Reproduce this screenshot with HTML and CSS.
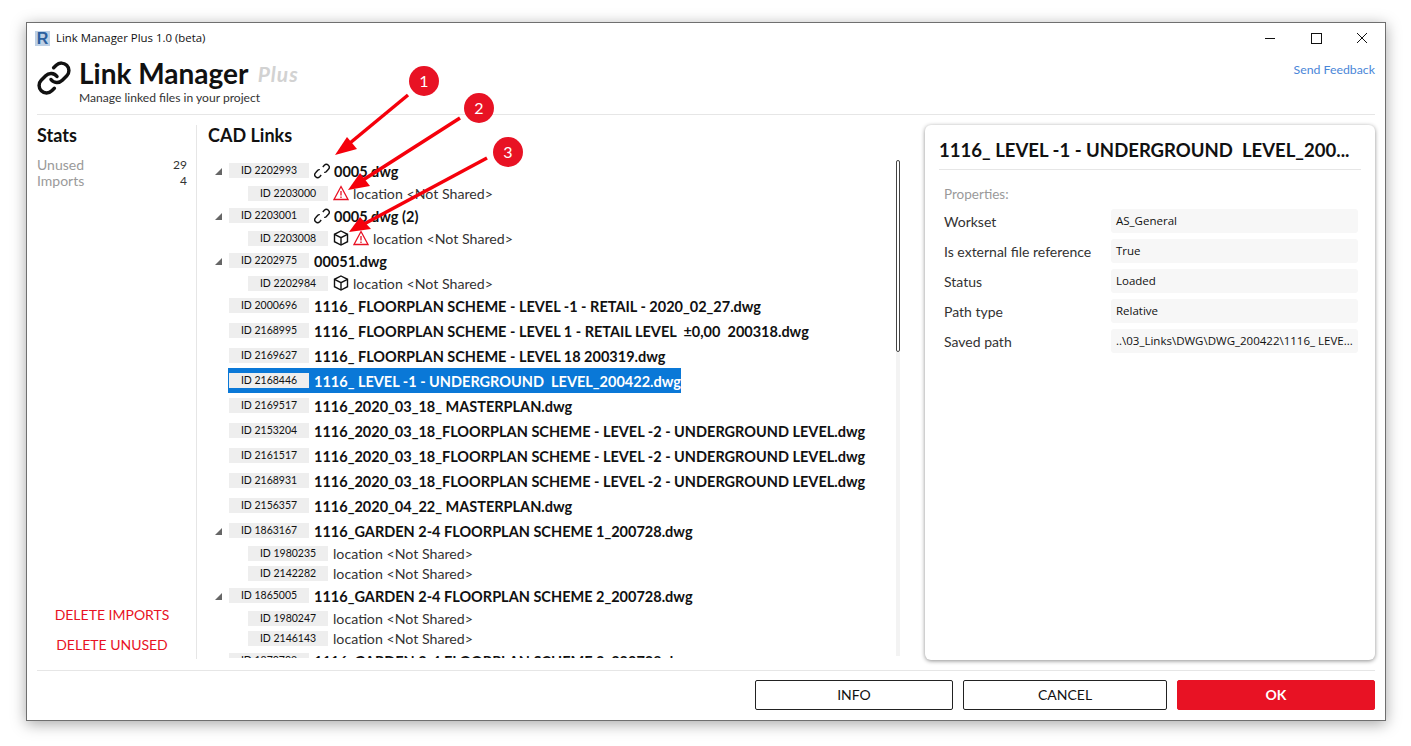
FILE: index.html

```html
<!DOCTYPE html>
<html lang="en">
<head>
    <meta charset="UTF-8">
    <title>Link Manager Plus</title>
    <link rel="stylesheet" href="styles.css">
</head>
<body>

<svg class="defs" width="0" height="0">
    <symbol id="i-link" viewBox="0 0 24 24">
        <path d="M10 13a5 5 0 0 0 7.54.54l3-3a5 5 0 0 0-7.07-7.07l-1.72 1.71"/>
        <path d="M14 11a5 5 0 0 0-7.54-.54l-3 3a5 5 0 0 0 7.07 7.07l1.71-1.71"/>
    </symbol>
    <symbol id="i-broken" viewBox="0 0 16 16">
        <path d="M8.800 4L10.300 2.200a2.900 2.900 0 0 1 4.100 4.100L12.200 8.800a2 2 0 0 1-2 .5"/>
        <path d="M7.200 12L5.700 13.800a2.900 2.900 0 0 1-4.100-4.100L3.800 7.200a2 2 0 0 1 2-.5"/>
    </symbol>
    <symbol id="i-warn" viewBox="0 0 16 16">
        <path d="M8 1.500L15 14.500H1z"/>
        <path d="M8 6v4.600M8 11.600v1.400"/>
    </symbol>
    <symbol id="i-cube" viewBox="0 0 16 16">
        <path d="M8 1L14.500 4.300V11.700L8 15L1.500 11.700V4.300z"/>
        <path d="M1.500 4.300L8 7.600L14.500 4.300M8 7.600V15"/>
    </symbol>
</svg>

<div class="window">
    <div class="titlebar">
        <span class="app-icon">R</span>
        <span class="app-title">Link Manager Plus 1.0 (beta)</span>
        <div class="win-buttons">
            <span class="win-btn"><i class="win-min"></i></span>
            <span class="win-btn"><i class="win-max"></i></span>
            <span class="win-btn">
                <svg width="12" height="12" viewBox="0 0 12 12"><path d="M1 1L11 11M11 1L1 11" stroke="#111" fill="none"/></svg>
            </span>
        </div>
    </div>

    <div class="header">
        <svg class="logo"><use href="#i-link"/></svg>
        <div class="heading">
            <h1>Link Manager <em>Plus</em></h1>
            <p>Manage linked files in your project</p>
        </div>
        <a class="feedback">Send Feedback</a>
    </div>

    <div class="main">
        <div class="stats">
            <h2>Stats</h2>
            <div class="stat"><span>Unused</span><b>29</b></div>
            <div class="stat"><span>Imports</span><b>4</b></div>
            <div class="delete-actions">
                <a>DELETE IMPORTS</a>
                <a>DELETE UNUSED</a>
            </div>
        </div>

        <div class="links">
            <h2>CAD Links</h2>
            <div class="tree-wrap">
                <div class="tree">
                    <div class="row"><i class="caret"></i><span class="chip">ID 2202993</span><svg class="ic stroke"><use href="#i-broken"/></svg><span class="name">0005.dwg</span></div>
                    <div class="row child"><span class="chip">ID 2203000</span><svg class="ic warn"><use href="#i-warn"/></svg><span class="sub">location &lt;Not Shared&gt;</span></div>
                    <div class="row"><i class="caret"></i><span class="chip">ID 2203001</span><svg class="ic stroke"><use href="#i-broken"/></svg><span class="name">0005.dwg (2)</span></div>
                    <div class="row child"><span class="chip">ID 2203008</span><svg class="ic stroke"><use href="#i-cube"/></svg><svg class="ic warn"><use href="#i-warn"/></svg><span class="sub">location &lt;Not Shared&gt;</span></div>
                    <div class="row"><i class="caret"></i><span class="chip">ID 2202975</span><span class="name">00051.dwg</span></div>
                    <div class="row child"><span class="chip">ID 2202984</span><svg class="ic stroke"><use href="#i-cube"/></svg><span class="sub">location &lt;Not Shared&gt;</span></div>
                    <div class="row"><span class="chip">ID 2000696</span><span class="name">1116_ FLOORPLAN SCHEME - LEVEL -1 - RETAIL - 2020_02_27.dwg</span></div>
                    <div class="row"><span class="chip">ID 2168995</span><span class="name">1116_ FLOORPLAN SCHEME - LEVEL 1 - RETAIL LEVEL &nbsp;±0,00 &nbsp;200318.dwg</span></div>
                    <div class="row"><span class="chip">ID 2169627</span><span class="name">1116_ FLOORPLAN SCHEME - LEVEL 18 200319.dwg</span></div>
                    <div class="row selected"><span class="chip">ID 2168446</span><span class="name">1116_ LEVEL -1 - UNDERGROUND &nbsp;LEVEL_200422.dwg</span></div>
                    <div class="row"><span class="chip">ID 2169517</span><span class="name">1116_2020_03_18_ MASTERPLAN.dwg</span></div>
                    <div class="row"><span class="chip">ID 2153204</span><span class="name">1116_2020_03_18_FLOORPLAN SCHEME - LEVEL -2 - UNDERGROUND LEVEL.dwg</span></div>
                    <div class="row"><span class="chip">ID 2161517</span><span class="name">1116_2020_03_18_FLOORPLAN SCHEME - LEVEL -2 - UNDERGROUND LEVEL.dwg</span></div>
                    <div class="row"><span class="chip">ID 2168931</span><span class="name">1116_2020_03_18_FLOORPLAN SCHEME - LEVEL -2 - UNDERGROUND LEVEL.dwg</span></div>
                    <div class="row"><span class="chip">ID 2156357</span><span class="name">1116_2020_04_22_ MASTERPLAN.dwg</span></div>
                    <div class="row"><i class="caret"></i><span class="chip">ID 1863167</span><span class="name">1116_GARDEN 2-4 FLOORPLAN SCHEME 1_200728.dwg</span></div>
                    <div class="row child"><span class="chip">ID 1980235</span><span class="sub">location &lt;Not Shared&gt;</span></div>
                    <div class="row child"><span class="chip">ID 2142282</span><span class="sub">location &lt;Not Shared&gt;</span></div>
                    <div class="row"><i class="caret"></i><span class="chip">ID 1865005</span><span class="name">1116_GARDEN 2-4 FLOORPLAN SCHEME 2_200728.dwg</span></div>
                    <div class="row child"><span class="chip">ID 1980247</span><span class="sub">location &lt;Not Shared&gt;</span></div>
                    <div class="row child"><span class="chip">ID 2146143</span><span class="sub">location &lt;Not Shared&gt;</span></div>
                    <div class="row"><i class="caret"></i><span class="chip">ID 1870709</span><span class="name">1116_GARDEN 2-4 FLOORPLAN SCHEME 3_200728.dwg</span></div>
                </div>
                <div class="scrollbar"><div class="thumb"></div></div>
            </div>
        </div>

        <div class="details">
            <h3>1116_ LEVEL -1 - UNDERGROUND &nbsp;LEVEL_200...</h3>
            <div class="props">
                <div class="props-title">Properties:</div>
                <div class="prop"><span>Workset</span><b>AS_General</b></div>
                <div class="prop"><span>Is external file reference</span><b>True</b></div>
                <div class="prop"><span>Status</span><b>Loaded</b></div>
                <div class="prop"><span>Path type</span><b>Relative</b></div>
                <div class="prop"><span>Saved path</span><b>..\03_Links\DWG\DWG_200422\1116_ LEVE...</b></div>
            </div>
        </div>
    </div>

    <div class="footer">
        <button class="btn btn-info">INFO</button>
        <button class="btn btn-cancel">CANCEL</button>
        <button class="btn btn-ok">OK</button>
    </div>
</div>

<!-- callouts drawn over the screenshot -->
<svg class="callouts" width="1411" height="746" viewBox="0 0 1411 746">
    <g class="arrow">
        <path d="M408 95L350 143"/><path class="head" d="M335 155L347 137L357 149z"/>
        <path d="M460 118L363 180"/><path class="head" d="M348 190L360 173L370 186z"/>
        <path d="M487 158L364 224"/><path class="head" d="M349 232L360 217L371 229z"/>
    </g>
    <circle class="badge" cx="424" cy="81" r="15"/><text class="badge-text" x="424" y="87">1</text>
    <circle class="badge" cx="479" cy="108" r="15"/><text class="badge-text" x="479" y="114">2</text>
    <circle class="badge" cx="508" cy="152" r="15"/><text class="badge-text" x="508" y="158">3</text>
</svg>

</body>
</html>
```

FILE: styles.css

```css
body {
    margin: 0;
    width: 1411px;
    height: 746px;
    overflow: hidden;
    background: #fff;
    font-family: Lato, "Liberation Sans", sans-serif;
    color: #111;
}
h1, h2, h3, p {
    margin: 0;
}
.defs {
    position: absolute;
}
.window {
    box-sizing: border-box;
    width: 1360px;
    height: 699px;
    margin: 22px 0 0 26px;
    padding: 0 10px 0 10px;
    border: 1px solid #6f6f6f;
    background: #fff;
    box-shadow: 0 3px 14px rgba(0,0,0,0.35);
    display: flex;
    flex-direction: column;
}

/* title bar */
.titlebar {
    height: 30px;
    flex: none;
    display: flex;
    align-items: center;
    font-family: "Open Sans", sans-serif;
    font-size: 11.400px;
    margin-right: -10px;
}
.app-icon {
    width: 15px;
    height: 15px;
    margin: 0 6px 0 -2px;
    background: #bdd0e5;
    color: #2a5f9e;
    font: bold 16px/15px "Liberation Sans", sans-serif;
    text-align: center;
}
.app-title {
    flex: 1;
    margin-bottom: 2px;
}
.win-buttons {
    display: flex;
}
.win-btn {
    width: 46px;
    height: 30px;
    display: flex;
    align-items: center;
    justify-content: center;
}
.win-min {
    width: 10px;
    border-top: 1px solid #111;
}
.win-max {
    width: 9px;
    height: 9px;
    border: 1px solid #111;
}

/* header */
.header {
    height: 61px;
    flex: none;
    display: flex;
    border-bottom: 1px solid #e6e6e6;
}
.logo {
    width: 36px;
    height: 36px;
    margin: 7px 7px 0 -1px;
    fill: none;
    stroke: #111;
    stroke-width: 2.300;
    stroke-linecap: round;
}
.heading {
    flex: 1;
}
h1 {
    font-size: 28px;
    line-height: 34px;
    margin-top: 3px;
    font-weight: 700;
}
h1 em {
    font-size: 21px;
    margin-left: 3px;
    color: #d2d2d2;
    letter-spacing: 1px;
    vertical-align: 2px;
    line-height: 1;
}
.heading p {
    margin-top: 2px;
    font-size: 12.100px;
    line-height: 12px;
    color: #333;
}
.feedback {
    margin-top: 9px;
    font-size: 12.300px;
    color: #4a86d8;
}

/* main area */
.main {
    flex: 1;
    min-height: 0;
    display: flex;
    padding-top: 10px;
}
h2 {
    font-size: 18px;
    line-height: 20px;
    font-weight: 700;
}
.stats {
    width: 150px;
    padding-right: 9px;
    border-right: 1px solid #e6e6e6;
    display: flex;
    flex-direction: column;
    margin-bottom: 11px;
}
.stat {
    display: flex;
    justify-content: space-between;
    font-size: 14px;
    line-height: 16px;
    color: #9a9a9a;
}
.stats h2 {
    margin-bottom: 12px;
}
.stat b {
    font-weight: 400;
    font-size: 12px;
    color: #333;
}
.delete-actions {
    margin-top: auto;
    padding-bottom: 6px;
    display: flex;
    flex-direction: column;
    gap: 13px;
    align-items: center;
    font-size: 14px;
    line-height: 17px;
    color: #e81224;
}
.links {
    width: 728px;
    flex: none;
    padding-left: 11px;
    box-sizing: border-box;
    display: flex;
    flex-direction: column;
    margin-bottom: 12px;
}
.links h2 {
    margin-bottom: 13px;
}
.tree-wrap {
    flex: 1;
    min-height: 0;
    display: flex;
}
.tree {
    flex: 1;
    min-width: 0;
    overflow: hidden;
}
.row {
    height: 25px;
    display: flex;
    align-items: center;
    padding-left: 21px;
    position: relative;
    white-space: nowrap;
}
.row.child {
    height: 20px;
    padding-left: 40px;
}
.caret {
    position: absolute;
    left: 7px;
    top: 10px;
    border-style: solid;
    border-width: 0 0 7px 7px;
    border-color: transparent transparent #666 transparent;
}
.chip {
    width: 80px;
    height: 15px;
    flex: none;
    margin-right: 5px;
    background: #eee;
    font-size: 10.500px;
    line-height: 14px;
    text-align: center;
    color: #111;
}
.name {
    margin-top: 2px;
    font-size: 14.500px;
    font-weight: 700;
}
.sub {
    font-size: 14.200px;
    color: #333;
}
.ic {
    width: 16px;
    height: 16px;
    flex: none;
    fill: none;
    margin-right: 4px;
}
.ic.stroke {
    stroke: #111;
    stroke-width: 1.400;
}
.ic.warn {
    stroke: #e81224;
    stroke-width: 1.300;
}
.row.selected {
    width: 453px;
    margin-left: 20px;
    box-sizing: border-box;
    padding-left: 1px;
    background: #0a78d7;
}
.row.selected .name {
    color: #fff;
}
.scrollbar {
    width: 4px;
    margin: 2px 25px 2px 0;
    background: #f3f3f3;
}
.thumb {
    box-sizing: border-box;
    height: 192px;
    border: 1px solid #444;
    border-radius: 2px;
    background: #fff;
}

/* details card */
.details {
    width: 450px;
    flex: none;
    box-sizing: border-box;
    height: 535px;
    padding: 0 15px 0 14px;
    border-radius: 6px;
    background: #fff;
    box-shadow: 0 1px 4px rgba(0,0,0,0.45);
}
.details h3 {
    font-size: 18.550px;
    line-height: 38px;
    padding-top: 6px;
    font-weight: 700;
    white-space: nowrap;
    border-bottom: 1px solid #e6e6e6;
    margin-right: -1px;
}
.props {
    padding: 14px 2px 0 5px;
}
.props-title {
    font-size: 13.500px;
    line-height: 20px;
    color: #9a9a9a;
    margin-bottom: 5px;
}
.prop {
    height: 24px;
    margin-bottom: 6px;
    display: flex;
    align-items: center;
    font-size: 14px;
    color: #333;
}
.prop span {
    width: 167px;
    flex: none;
}
.prop b {
    flex: 1;
    height: 24px;
    padding-left: 5px;
    border-radius: 3px;
    background: #f7f7f7;
    font-family: "Open Sans", sans-serif;
    font-weight: 400;
    font-size: 11.500px;
    line-height: 23px;
    color: #111;
    white-space: nowrap;
}

/* footer */
.footer {
    height: 50px;
    flex: none;
    box-sizing: border-box;
    border-top: 1px solid #e6e6e6;
    padding-top: 9px;
    display: flex;
    justify-content: flex-end;
    gap: 10px;
}
.btn {
    height: 30px;
    padding: 0 0 2px;
    border: 1px solid #222;
    border-radius: 2px;
    background: #fff;
    font-family: Lato, sans-serif;
    font-size: 14px;
    color: #111;
}
.btn-info {
    width: 198px;
}
.btn-cancel {
    width: 204px;
}
.btn-ok {
    width: 198px;
    border-color: #e81224;
    background: #e81224;
    color: #fff;
    font-weight: 700;
}

/* callouts */
.callouts {
    position: absolute;
    left: 0;
    top: 0;
}
.arrow path {
    stroke: #f5000b;
    stroke-width: 3.500;
    fill: none;
}
.arrow .head {
    stroke: none;
    fill: #f5000b;
}
.badge {
    fill: #e81224;
}
.badge-text {
    fill: #fff;
    font-size: 16px;
    font-weight: 400;
    text-anchor: middle;
}
```
